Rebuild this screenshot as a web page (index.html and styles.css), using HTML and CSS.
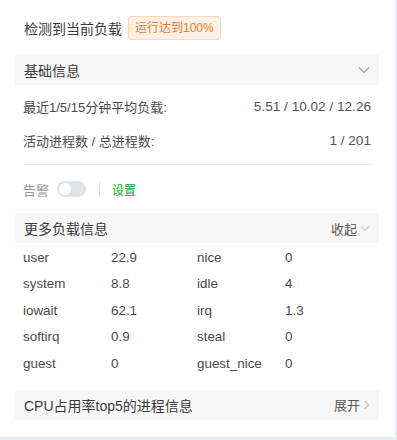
FILE: index.html
```html
<!DOCTYPE html>
<html lang="zh-CN">
<head>
    <meta charset="UTF-8">
    <meta name="viewport" content="width=device-width, initial-scale=1.0">
    <title>负载详情</title>
    <link rel="stylesheet" href="styles.css">
</head>
<body>
    <div class="panel">
        <div class="title-row">
            <span class="title">检测到当前负载</span>
            <span class="badge">运行达到100%</span>
        </div>

        <div class="section-head">
            <span>基础信息</span>
            <svg class="chev" width="12" height="8" viewBox="0 0 12 8"><path d="M1 1.5 L6 6.5 L11 1.5" fill="none" stroke="#999" stroke-width="1.1"/></svg>
        </div>

        <div class="info-list">
            <div class="info-row">
                <span>最近1/5/15分钟平均负载:</span>
                <span class="value">5.51 / 10.02 / 12.26</span>
            </div>
            <div class="info-row">
                <span>活动进程数 / 总进程数:</span>
                <span class="value">1 / 201</span>
            </div>
        </div>

        <div class="divider"></div>

        <div class="alarm-row">
            <span class="alarm-label">告警</span>
            <span class="switch"><span class="knob"></span></span>
            <span class="sep"></span>
            <span class="link">设置</span>
        </div>

        <div class="section-head">
            <span>更多负载信息</span>
            <span class="toggle">收起<svg width="10" height="7" viewBox="0 0 10 7"><path d="M1 1.5 L5 5.5 L9 1.5" fill="none" stroke="#aaa" stroke-width="1"/></svg></span>
        </div>

        <div class="load-table">
            <span>user</span><span>22.9</span><span>nice</span><span>0</span>
            <span>system</span><span>8.8</span><span>idle</span><span>4</span>
            <span>iowait</span><span>62.1</span><span>irq</span><span>1.3</span>
            <span>softirq</span><span>0.9</span><span>steal</span><span>0</span>
            <span>guest</span><span>0</span><span>guest_nice</span><span>0</span>
        </div>

        <div class="section-head">
            <span>CPU占用率top5的进程信息</span>
            <span class="toggle">展开<svg width="7" height="10" viewBox="0 0 7 10"><path d="M1.5 1 L5.5 5 L1.5 9" fill="none" stroke="#aaa" stroke-width="1"/></svg></span>
        </div>
    </div>
</body>
</html>
```

FILE: styles.css
```css
body {
    margin: 0;
    padding: 0;
    background-color: #e9edf2;
    font-family: 'Liberation Sans', 'Noto Sans CJK SC', sans-serif;
    color: #333;
    font-size: 13px;
}

.panel {
    width: 395px;
    height: 437px;
    box-sizing: border-box;
    background: #fff;
    padding: 16px 16px 0 15px;
}

.title-row {
    display: flex;
    align-items: center;
    height: 24px;
    padding-left: 9px;
    margin-bottom: 15px;
}

.title {
    font-size: 14px;
    color: #3a3a3a;
}

.badge {
    margin-left: 6px;
    padding: 0 6px;
    height: 22px;
    line-height: 22px;
    font-size: 12px;
    color: #ec7a2c;
    background: #fdf1e7;
    border: 1px solid #f9d8bd;
    border-radius: 3px;
}

.section-head {
    display: flex;
    align-items: center;
    justify-content: space-between;
    height: 30px;
    padding: 0 9px;
    background: #f7f7f7;
    font-size: 14px;
    color: #3a3a3a;
}

.toggle {
    display: flex;
    align-items: center;
    gap: 3px;
    font-size: 13px;
    color: #555;
}

.info-list {
    padding-top: 4px;
}

.info-row {
    display: flex;
    justify-content: space-between;
    padding: 0 8px;
    height: 34px;
    align-items: center;
    color: #4a4a4a;
}

.value {
    color: #555;
    font-size: 13.6px;
}

.divider {
    height: 1px;
    background: #eee;
    margin: 7px 8px 0 8px;
}

.alarm-row {
    display: flex;
    align-items: center;
    height: 48px;
    padding-left: 8px;
}

.alarm-label {
    color: #999;
}

.switch {
    position: relative;
    display: inline-block;
    width: 29px;
    height: 16px;
    border-radius: 8px;
    background: #e0e3ea;
    margin-left: 8px;
}

.knob {
    position: absolute;
    top: 2px;
    left: 2px;
    width: 12px;
    height: 12px;
    border-radius: 50%;
    background: #fff;
}

.sep {
    width: 1px;
    height: 14px;
    background: #ddd;
    margin: 0 12px 0 13px;
}

.link {
    color: #20a53a;
    font-size: 12px;
}

.load-table {
    display: grid;
    grid-template-columns: 88px 86px 88px 1fr;
    grid-auto-rows: 26.5px;
    align-items: center;
    padding: 0 8px;
    margin: 1px 0 13px 0;
    color: #4a4a4a;
    font-size: 13.4px;
}
```
